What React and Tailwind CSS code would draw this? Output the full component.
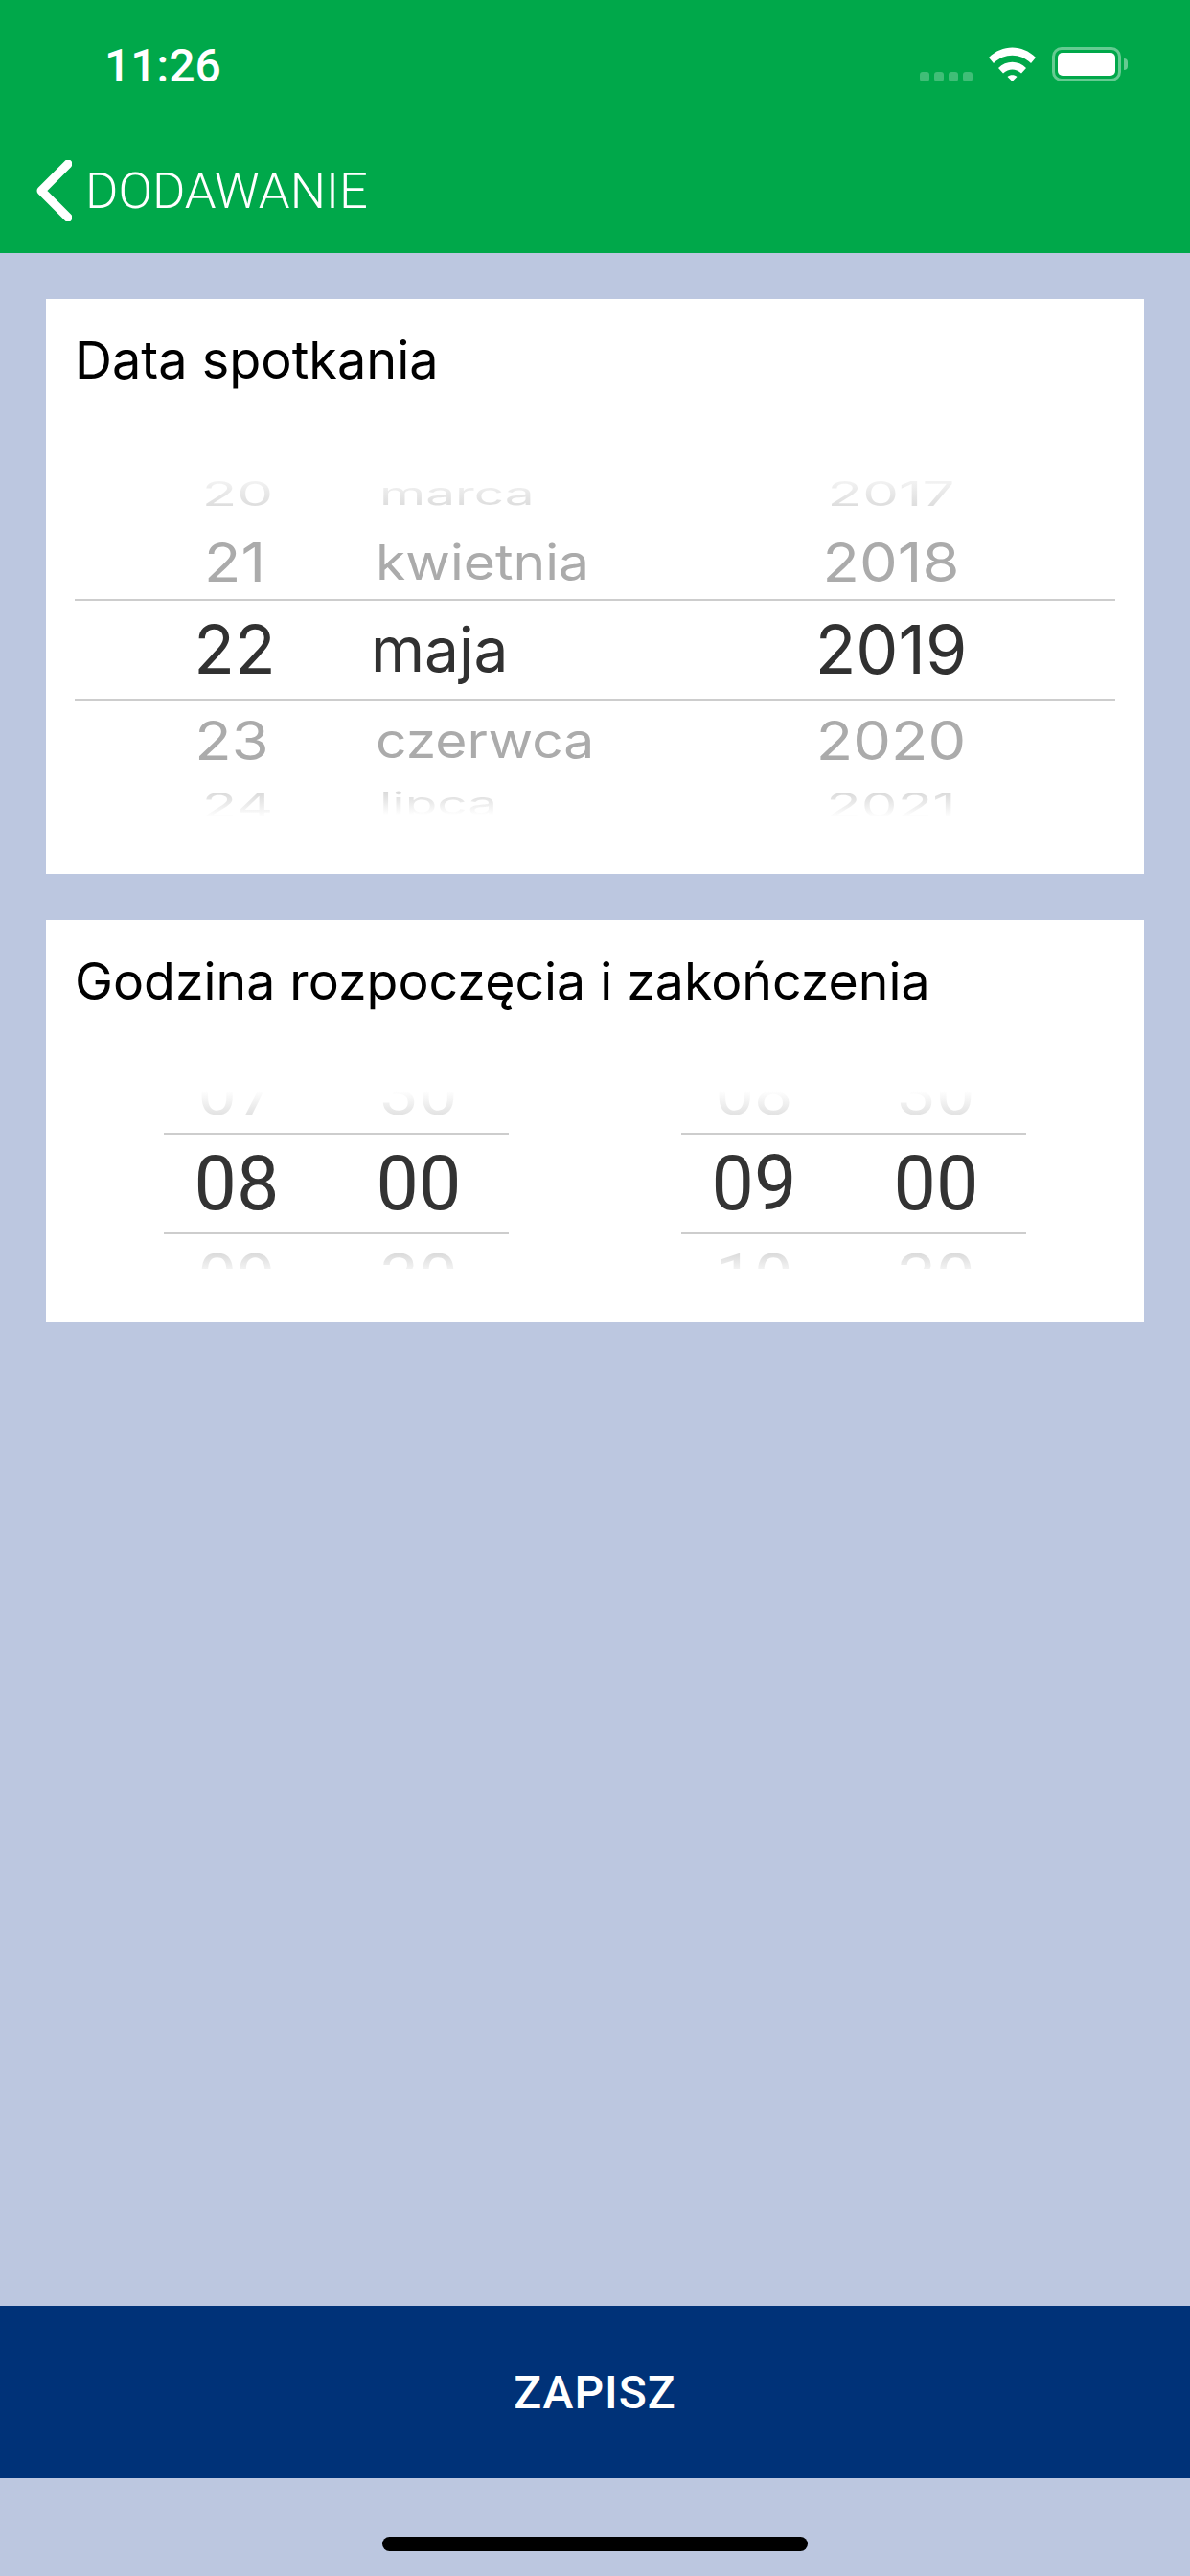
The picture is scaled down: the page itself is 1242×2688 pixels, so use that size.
import React from 'react';

// wheel row styles: the picker is drawn as a cylinder, outer rows get squashed
const wheelFont = "font-['Inter',sans-serif] leading-none";
const nearText = `${wheelFont} text-[#ababab] scale-y-[0.9]`;
const farTopText = `${wheelFont} scale-y-[0.58] bg-linear-to-b from-[#f6f6f6] to-[#dadada] bg-clip-text text-transparent`;
const farBottomText = `${wheelFont} scale-y-[0.58] origin-top bg-linear-to-b from-[#d4d4d4] to-[#ffffff] to-85% bg-clip-text text-transparent`;
const selectedText = `${wheelFont} text-[#313131]`;

function DateRow({ day, month, year, textClass, height, rowClass = 'items-center', dayClass = '', monthClass = '', yearClass = '', selected }) {
  return (
    <div
      className={`flex pl-[25px] overflow-hidden ${rowClass} ${height} ${
        selected ? 'border-y-2 border-[#cdcdcd]' : ''
      }`}
    >
      <div className={`w-[284px] text-center ${textClass} ${dayClass}`}>{day}</div>
      <div className={`w-[400px] ${textClass} ${monthClass}`}>{month}</div>
      <div className={`w-[286px] text-center ${textClass} ${yearClass}`}>{year}</div>
    </div>
  );
}

function Cell({ value, className }) {
  return <div className={`w-[152px] text-center ${className}`}>{value}</div>;
}

function TimeWheel({ top, selected, bottom }) {
  const above = 'text-[72px] leading-none scale-y-[0.9] origin-bottom bg-linear-to-b from-[#ffffff] from-45% to-[#d6d6d6] bg-clip-text text-transparent';
  const below = 'text-[72px] leading-none scale-y-[0.9] origin-top bg-linear-to-b from-[#cfcfcf] to-[#ffffff] to-50% bg-clip-text text-transparent';
  const current = 'text-[79px] leading-none text-[#333333]';

  return (
    <div className="w-[360px] flex flex-col">
      <div className="h-[36px] overflow-hidden flex items-end">
        <Cell value={top[0]} className={above} />
        <Cell value={top[1]} className={`ml-[38px] ${above}`} />
      </div>
      <div className="mt-[8px] h-[106px] border-y-2 border-[#cdcdcd] flex items-center">
        <Cell value={selected[0]} className={current} />
        <Cell value={selected[1]} className={`ml-[38px] ${current}`} />
      </div>
      <div className="mt-[12px] h-[24px] overflow-hidden flex items-start">
        <Cell value={bottom[0]} className={below} />
        <Cell value={bottom[1]} className={`ml-[38px] ${below}`} />
      </div>
    </div>
  );
}

function StatusBar() {
  return (
    <div className="h-[110px] pt-[47px] pl-[109px] pr-[65px] flex justify-between items-start">
      <span className="text-[48px] leading-[44px] font-medium text-white">11:26</span>
      <div className="flex items-end pt-[2px]">
        <div className="flex gap-[5px] mr-[17px]">
          <span className="w-[10px] h-[10px] rounded-[3px] bg-white/25" />
          <span className="w-[10px] h-[10px] rounded-[3px] bg-white/25" />
          <span className="w-[10px] h-[10px] rounded-[3px] bg-white/25" />
          <span className="w-[10px] h-[10px] rounded-[3px] bg-white/25" />
        </div>
        <svg width="49" height="36" viewBox="0 0 49 36" fill="#fff">
          <path d="M0 11C14-3 35-3 49 11L44 17C33 6 16 6 5 17Z" />
          <path d="M10 22C18 13.5 31 13.5 39 22L34 27.5C28 22 21 22 15 27.5Z" />
          <path d="M19.5 31C22 28.5 27 28.5 29.5 31L24.5 36Z" />
        </svg>
        <div className="ml-[17px] flex items-center">
          <div className="w-[72px] h-[36px] rounded-[10px] border-[3px] border-white/40 p-[3px]">
            <div className="w-full h-full rounded-[5px] bg-white" />
          </div>
          <div className="ml-[3px] w-[4px] h-[12px] rounded-r-[4px] bg-white/40" />
        </div>
      </div>
    </div>
  );
}

export default function App() {
  return (
    <div className="h-[2688px] w-[1242px] flex flex-col bg-[#bcc7e0] font-['Roboto',sans-serif]">
      <header className="h-[264px] bg-[#00a84a]">
        <StatusBar />
        <div className="mt-[57px] pl-[38px] flex items-center">
          <svg width="37" height="64" viewBox="0 0 37 64" fill="none" stroke="#fff" strokeWidth="9" strokeLinecap="round" strokeLinejoin="round">
            <path d="M33 4L5 32L33 60" />
          </svg>
          <span className="ml-[14px] text-[52.5px] leading-none font-light text-white">DODAWANIE</span>
        </div>
      </header>

      <main className="flex-1 px-[48px] pt-[48px] flex flex-col gap-[48px]">
        <section className="h-[600px] bg-white pt-[32px] px-[30px]">
          <h2 className="font-['Inter',sans-serif] text-[54px] leading-[64px] text-black">Data spotkania</h2>
          <div className="mt-[89px]">
            <DateRow
              height="h-[36px]"
              textClass={farTopText}
              day="20"
              month="marca"
              year="2017"
              dayClass="text-[60px] translate-x-[3px]"
              monthClass="text-[55px] translate-x-[9px]"
              yearClass="text-[60px]"
            />
            <DateRow
              height="h-[92px]"
              rowClass="items-center pt-[14px]"
              textClass={nearText}
              day="21"
              month="kwietnia"
              year="2018"
              dayClass="text-[63px]"
              monthClass="text-[57px] translate-x-[5px]"
              yearClass="text-[63px]"
            />
            <DateRow
              selected
              height="h-[106px]"
              textClass={selectedText}
              day="22"
              month="maja"
              year="2019"
              dayClass="text-[70px]"
              monthClass="text-[64px]"
              yearClass="text-[70px]"
            />
            <DateRow
              height="h-[92px]"
              rowClass="items-center pb-[10px]"
              textClass={nearText}
              day="23"
              month="czerwca"
              year="2020"
              dayClass="text-[63px] -translate-x-[3px]"
              monthClass="text-[57px] translate-x-[5px]"
              yearClass="text-[63px]"
            />
            <DateRow
              height="h-[36px]"
              rowClass="items-start"
              textClass={farBottomText}
              day="24"
              month="lipca"
              year="2021"
              dayClass="text-[60px] translate-x-[3px]"
              monthClass="text-[55px] translate-x-[9px]"
              yearClass="text-[60px]"
            />
          </div>
        </section>

        <section className="h-[420px] bg-white pt-[32px] px-[30px]">
          <h2 className="font-['Inter',sans-serif] text-[53.6px] leading-[64px] text-black">Godzina rozpoczęcia i zakończenia</h2>
          <div className="mt-[82px] flex justify-center gap-[180px]">
            <TimeWheel top={['07', '30']} selected={['08', '00']} bottom={['09', '30']} />
            <TimeWheel top={['08', '30']} selected={['09', '00']} bottom={['10', '30']} />
          </div>
        </section>
      </main>

      <button className="h-[180px] pt-[2px] bg-[#003278] text-white text-[48px] font-medium tracking-[1px]">ZAPISZ</button>

      <footer className="h-[102px] pt-[61px] flex justify-center">
        <div className="w-[444px] h-[15px] rounded-full bg-black" />
      </footer>
    </div>
  );
}
